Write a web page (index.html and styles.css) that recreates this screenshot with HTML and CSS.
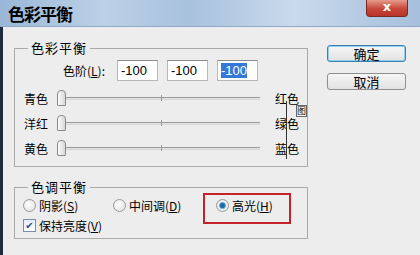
FILE: index.html
```html
<!DOCTYPE html>
<html lang="zh-CN">

<head>
    <meta charset="UTF-8">
    <title>色彩平衡</title>
    <link rel="stylesheet" href="styles.css">
</head>

<body>
    <div class="win">
        <div class="titlebar">
            <span class="title">色彩平衡</span>
            <span class="close">x</span>
        </div>
        <div class="main">
            <div class="left">
                <fieldset class="grp grp1">
                    <legend>色彩平衡</legend>
                    <div class="level">
                        <span class="lvl-label">色阶(<u>L</u>):</span>
                        <span class="num">-100</span>
                        <span class="num">-100</span>
                        <span class="num"><em>-100</em></span>
                    </div>
                    <div class="srow">
                        <span class="sl">青色</span>
                        <div class="track"><i class="thumb"></i><b class="tick"></b></div>
                        <span class="sr">红色</span>
                    </div>
                    <div class="srow">
                        <span class="sl">洋红</span>
                        <div class="track"><i class="thumb"></i><b class="tick"></b></div>
                        <span class="sr">绿色</span>
                    </div>
                    <div class="srow">
                        <span class="sl">黄色</span>
                        <div class="track"><i class="thumb"></i><b class="tick"></b></div>
                        <span class="sr">蓝色</span>
                    </div>
                </fieldset>
                <fieldset class="grp grp2">
                    <legend>色调平衡</legend>
                    <div class="rrow">
                        <span class="opt o1"><i class="radio"></i>阴影(<u>S</u>)</span>
                        <span class="opt o2"><i class="radio"></i>中间调(<u>D</u>)</span>
                        <span class="opt o3"><i class="radio on"></i>高光(<u>H</u>)</span>
                    </div>
                    <div class="crow">
                        <span class="opt"><i class="check">&#10004;</i>保持亮度(<u>V</u>)</span>
                    </div>
                </fieldset>
            </div>
            <div class="right">
                <div class="btn def">确定</div>
                <div class="btn">取消</div>
            </div>
        </div>
    </div>
    <!-- 水印和红框 -->
    <div class="mark"><span>图</span></div>
    <div class="redbox"></div>
</body>

</html>
```
FILE: styles.css
```css
* {
    margin: 0;
    padding: 0;
    box-sizing: border-box;
}

body {
    width: 420px;
    height: 255px;
    background: #ededed;
    font-family: "Noto Sans CJK SC", "DejaVu Sans", sans-serif;
    font-size: 12px;
    color: #000;
    position: relative;
    overflow: hidden;
}

u {
    text-decoration: underline;
}

.win {
    height: 255px;
    display: flex;
    flex-direction: column;
}

.titlebar {
    height: 27px;
    display: flex;
    align-items: flex-start;
    background: linear-gradient(to right, #9ab7d8 0%, #bcd1e7 25%, #a8c1de 45%, #c9daec 70%, #a6bfdc 100%);
    border-bottom: 1px solid #8ea9c8;
}

.title {
    font-size: 17px;
    font-weight: bold;
    line-height: 27px;
    margin-left: 8px;
    letter-spacing: -1px;
}

.close {
    margin-left: auto;
    margin-right: 12px;
    width: 42px;
    height: 17px;
    border: 1px solid #7a2a24;
    border-top: none;
    border-radius: 0 0 4px 4px;
    background: linear-gradient(#e59a8c, #c7463a 55%, #b93428);
    color: #fff;
    font-family: "DejaVu Sans", sans-serif;
    font-weight: bold;
    font-size: 13px;
    line-height: 14px;
    text-align: center;
}

.main {
    flex: 1;
    display: flex;
    border-left: 3px solid #1f2b3a;
    padding: 13px 0 0 11px;
}

.grp {
    width: 294px;
    border: 1px solid #a9a9a9;
    padding: 0;
}

.grp legend {
    margin-left: 13px;
    padding: 0 3px;
    font-size: 13px;
    letter-spacing: 1px;
    line-height: 16px;
}

.grp1 {
    padding-bottom: 5px;
}

.level {
    display: flex;
    align-items: center;
    height: 21px;
    margin-top: 4px;
    padding-left: 48px;
}

.lvl-label {
    width: 54px;
}

.num {
    width: 41px;
    height: 21px;
    margin-right: 9px;
    background: #fff;
    border: 1px solid #b8b8b8;
    border-top-color: #8c8c8c;
    padding-left: 3px;
    line-height: 19px;
    font-family: "Liberation Sans", sans-serif;
    font-size: 13px;
}

.num em {
    font-style: normal;
    background: #3478d8;
    color: #fff;
}

.srow {
    display: flex;
    align-items: center;
    height: 25px;
    padding-left: 9px;
}

.level + .srow {
    margin-top: 5px;
}

.sl {
    width: 33px;
}

.track {
    position: relative;
    width: 203px;
    height: 3px;
    border-top: 1px solid #9a9a9a;
    border-bottom: 1px solid #d6d6d6;
    background: #e4e4e4;
}

.thumb {
    position: absolute;
    left: 0;
    top: -8px;
    width: 9px;
    height: 16px;
    border: 1px solid #8a8a8a;
    border-radius: 4px 4px 1px 1px;
    background: linear-gradient(to right, #fafafa, #d8d8d8);
}

.tick {
    position: absolute;
    left: 104px;
    top: -3px;
    width: 1px;
    height: 6px;
    background: #9a9a9a;
}

.sr {
    margin-left: 15px;
}

.grp2 {
    margin-top: 12px;
    padding-bottom: 3px;
}

.rrow,
.crow {
    display: flex;
    align-items: center;
    height: 20px;
    padding-left: 8px;
}

.opt {
    display: flex;
    align-items: center;
}

.o1 {
    width: 90px;
}

.o2 {
    width: 103px;
}

.radio {
    width: 13px;
    height: 13px;
    margin-right: 3px;
    border-radius: 50%;
    border: 1px solid #9a9a9a;
    background: radial-gradient(circle at 40% 40%, #fff, #dcdcdc);
}

.radio.on {
    background: radial-gradient(circle, #1d6aa8 0 2px, #6aa8d8 3px, #f2f2f2 4px, #d6d6d6);
}

.check {
    width: 13px;
    height: 13px;
    margin-right: 3px;
    border: 1px solid #7a8ea8;
    background: linear-gradient(#e8eef6, #fff);
    color: #2a4a9a;
    font-style: normal;
    font-size: 10px;
    line-height: 11px;
    text-align: center;
    font-family: "DejaVu Sans", sans-serif;
}

.right {
    margin-left: 19px;
    padding-top: 5px;
    display: flex;
    flex-direction: column;
    gap: 11px;
}

.btn {
    width: 79px;
    height: 17px;
    border: 1px solid #8e8f8f;
    border-radius: 3px;
    background: linear-gradient(#f6f6f6, #e2e2e2);
    text-align: center;
    line-height: 15px;
    font-size: 13px;
}

.btn.def {
    border-color: #3c7fb1;
    box-shadow: inset 0 0 0 1px #8fd0f0;
}

.mark {
    position: absolute;
    left: 286px;
    top: 101px;
    width: 20px;
    height: 58px;
    border-left: 1px solid #333;
}

.mark span {
    position: absolute;
    left: 9px;
    top: 4px;
    font-size: 9px;
    line-height: 10px;
    border: 1px solid #666;
    background: #fff;
}

.redbox {
    position: absolute;
    left: 203px;
    top: 193px;
    width: 88px;
    height: 31px;
    border: 2px solid #c42129;
}
```
